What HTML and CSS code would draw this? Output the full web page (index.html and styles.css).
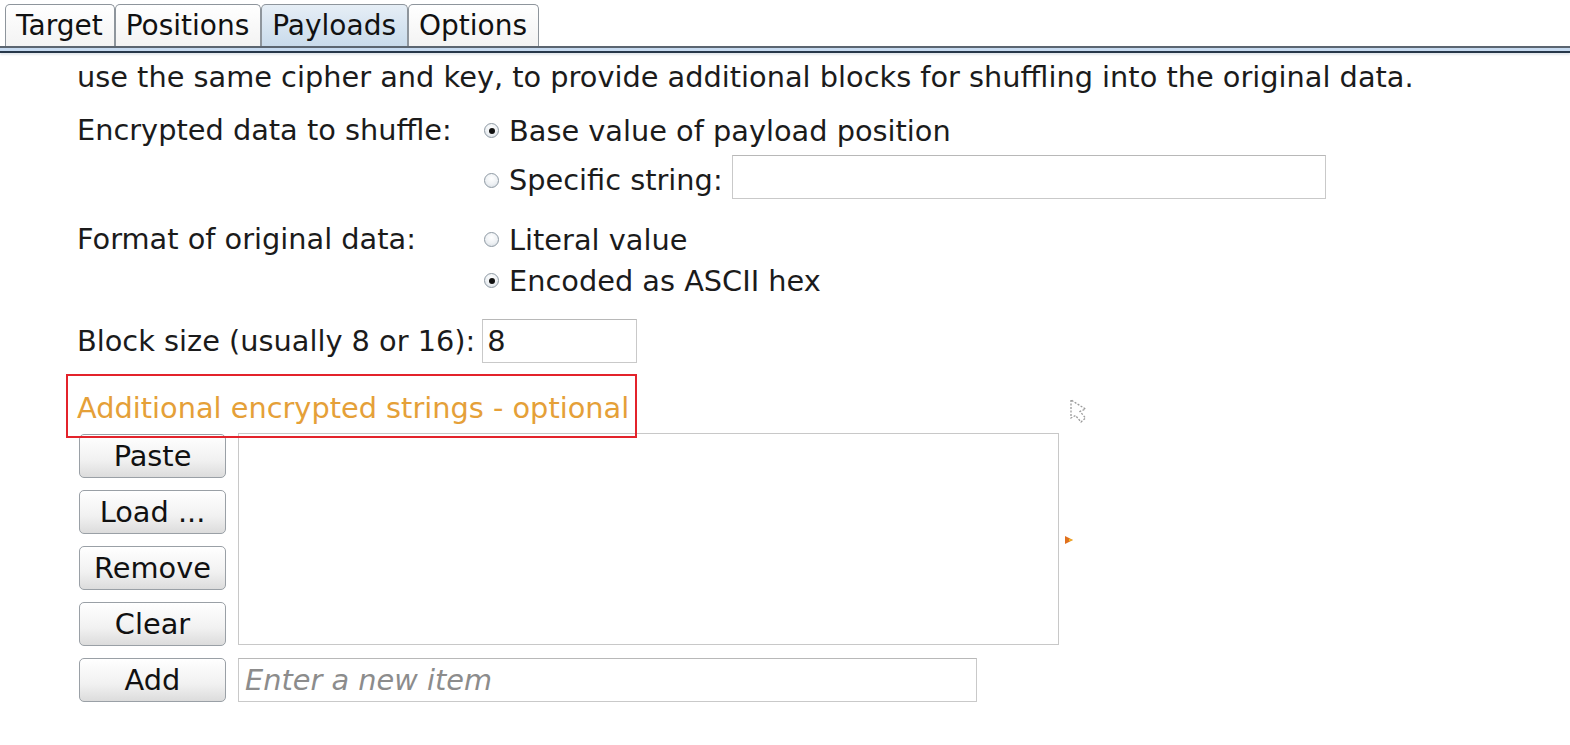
FILE: index.html
```html
<!DOCTYPE html>
<html>
<head>
<meta charset="utf-8">
<link rel="stylesheet" href="styles.css">
</head>
<body>
<div class="tabs">
  <div class="tab">Target</div>
  <div class="tab">Positions</div>
  <div class="tab active">Payloads</div>
  <div class="tab">Options</div>
</div>
<div class="tabline"></div>
<div class="content">
  <div class="intro">use the same cipher and key, to provide additional blocks for shuffling into the original data.</div>

  <div class="group g1">
    <div class="label">Encrypted data to shuffle:</div>
    <div class="opts">
      <div class="opt"><span class="radio on"></span>Base value of payload position</div>
      <div class="opt spec"><span class="optlbl"><span class="radio"></span>Specific string:</span><span class="field specfield"></span></div>
    </div>
  </div>

  <div class="group">
    <div class="label">Format of original data:</div>
    <div class="opts">
      <div class="opt"><span class="radio"></span>Literal value</div>
      <div class="opt"><span class="radio on"></span>Encoded as ASCII hex</div>
    </div>
  </div>

  <div class="blockrow">Block size (usually 8 or 16):<span class="field blockfield">8</span></div>

  <div class="addl">Additional encrypted strings - optional</div>

  <div class="listarea">
    <div class="btns">
      <div class="btn">Paste</div>
      <div class="btn">Load ...</div>
      <div class="btn">Remove</div>
      <div class="btn">Clear</div>
    </div>
    <div class="listbox"></div>
    <div class="side">
      <svg class="cursor" width="20" height="28" viewBox="0 0 20 28"><path d="M2 2 L2 20 L6.5 17.5 L12 24 L16.5 20 L11 13.5 L16.5 11 Z" fill="none" stroke="#9a9a9a" stroke-width="1.3" stroke-dasharray="2 1.5"/></svg>
      <svg class="tri" width="10" height="10" viewBox="0 0 10 10"><path d="M1 1 L9 5 L1 9 Z" fill="#e0701e"/><path d="M5 4 L9 5 L5 6 Z" fill="#f5d020"/></svg>
    </div>
  </div>
  <div class="addrow">
    <div class="btn">Add</div>
    <div class="field additem">Enter a new item</div>
  </div>
</div>
<div class="redbox"></div>
</body>
</html>
```
FILE: styles.css
```css
html, body {
  margin: 0;
  padding: 0;
  background: #ffffff;
}
body {
  font-family: "DejaVu Sans", "Noto Sans", sans-serif;
  font-size: 28.8px;
  color: #1b1b1b;
  width: 1570px;
  height: 745px;
  overflow: hidden;
  position: relative;
}
.tabs {
  display: flex;
  padding: 4px 0 0 5px;
  box-sizing: border-box;
  height: 46px;
}
.tab {
  height: 42px;
  box-sizing: border-box;
  border: 1px solid #8e959c;
  border-bottom: none;
  border-radius: 5px 5px 0 0;
  padding: 0 11px 0 10px;
  font-size: 28px;
  line-height: 42px;
  background: linear-gradient(#ffffff, #f3f3f3);
  color: #111;
}
.tab.active {
  background: linear-gradient(#e6eef6, #c9dbeb);
}
.tabline {
  height: 3px;
  border-top: 2px solid #5b6570;
  border-bottom: 2px solid #27384a;
  background: #c6daf0;
  box-shadow: 0 2px 2px #e4e8ec;
}
.content {
  padding-left: 77px;
}
.intro {
  line-height: 32px;
  margin-top: 8px;
  height: 32px;
}
.group {
  display: flex;
  margin-top: 18px;
}
.g1 {
  margin-top: 17px;
}
.label {
  width: 407px;
  line-height: 41px;
  height: 41px;
}
.opts {
  display: flex;
  flex-direction: column;
}
.opt {
  display: flex;
  align-items: center;
  height: 41px;
}
.opt.spec {
  height: 50px;
  align-items: flex-start;
}
.optlbl {
  display: flex;
  align-items: center;
  height: 42px;
  padding-top: 8px;
}
.radio {
  width: 15px;
  height: 15px;
  border-radius: 50%;
  border: 1px solid #8f9aa4;
  background: radial-gradient(circle at 50% 35%, #ffffff 0%, #eef1f4 55%, #cfd6dd 100%);
  margin-right: 10px;
  box-sizing: border-box;
  position: relative;
  flex: none;
}
.radio.on::after {
  content: "";
  position: absolute;
  left: 3.5px;
  top: 3.5px;
  width: 6px;
  height: 6px;
  border-radius: 50%;
  background: #111;
}
.field {
  display: inline-block;
  box-sizing: border-box;
  height: 44px;
  border: 1px solid #c9c9c9;
  border-top-color: #b8b8b8;
  background: #fff;
  line-height: 42px;
  padding-left: 4px;
}
.specfield {
  width: 594px;
  margin-left: 9px;
  margin-top: 4px;
}
.blockrow {
  display: flex;
  align-items: center;
  margin-top: 18px;
  height: 44px;
}
.blockfield {
  width: 155px;
  margin-left: 7px;
}
.addl {
  color: #e5a038;
  line-height: 40px;
  height: 40px;
  margin-top: 25px;
}
.listarea {
  display: flex;
  margin-top: 6px;
}
.btns {
  display: flex;
  flex-direction: column;
  gap: 12px;
  margin-left: 2px;
}
.btn {
  width: 147px;
  height: 44px;
  box-sizing: border-box;
  border: 1px solid #9aa0a6;
  border-radius: 5px;
  background: linear-gradient(#ffffff, #f1f1f1 60%, #dcdcdc);
  text-align: center;
  line-height: 42px;
  color: #111;
}
.listbox {
  width: 821px;
  height: 212px;
  box-sizing: border-box;
  border: 1px solid #c8c8c8;
  margin-left: 12px;
  margin-top: -1px;
}
.side {
  position: relative;
  width: 40px;
}
.cursor {
  position: absolute;
  left: 10px;
  top: -36px;
}
.tri {
  position: absolute;
  left: 5px;
  top: 101px;
}
.addrow {
  display: flex;
  margin-top: 12px;
}
.addrow .btn {
  margin-left: 2px;
}
.additem {
  width: 739px;
  margin-left: 12px;
  font-style: italic;
  color: #8c8c8c;
  padding-left: 6px;
}
.redbox {
  position: absolute;
  left: 66px;
  top: 374px;
  width: 571px;
  height: 64px;
  box-sizing: border-box;
  border: 2px solid #e3232b;
}
```
